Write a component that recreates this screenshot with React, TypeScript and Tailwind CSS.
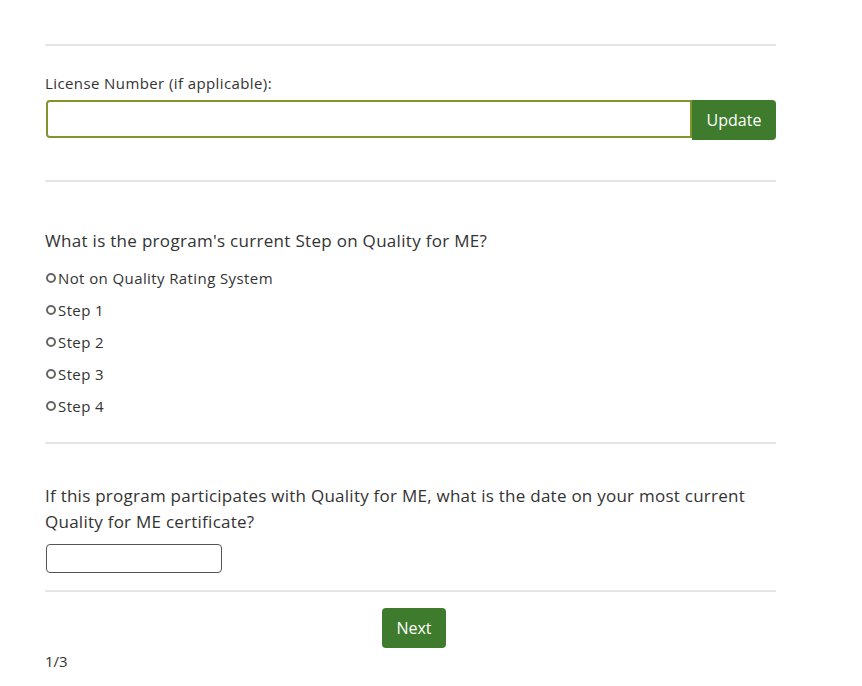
import { useState } from "react";

const steps = ["Not on Quality Rating System", "Step 1", "Step 2", "Step 3", "Step 4"];

export default function App() {
  const [license, setLicense] = useState("");
  const [step, setStep] = useState("");
  const [date, setDate] = useState("");

  return (
    <div className="bg-white min-h-[686px] text-[#333333] font-['Open_Sans',sans-serif]">
      <div className="w-[731px] ml-[45px] pt-[44px]">
        <hr className="border-t-2 border-[#e6e6e6]" />

        <div className="pt-[27px] pb-[40px]">
          <label className="block text-[15px] leading-[20px] tracking-[0.4px] mb-[7px]">
            License Number (if applicable):
          </label>
          <div className="flex items-stretch">
            <input
              type="text"
              value={license}
              onChange={(e) => setLicense(e.target.value)}
              className="flex-1 ml-px h-[38px] border-2 border-[#84942c] rounded-l-[4px] px-2 outline-none"
            />
            <button className="w-[84px] h-[40px] bg-[#3e7b2c] text-white text-[16px] rounded-r-[4px]">
              Update
            </button>
          </div>
        </div>

        <hr className="border-t-2 border-[#e6e6e6]" />

        <div className="pt-[46px] pb-[20px]">
          <p className="text-[17px] leading-[26px] tracking-[0.3px] mb-[8px]">
            What is the program's current Step on Quality for ME?
          </p>
          <div className="flex flex-col">
            {steps.map((s) => (
              <label key={s} className="flex items-center h-[32px] text-[15px] tracking-[0.4px] cursor-pointer">
                <input
                  type="radio"
                  name="step"
                  checked={step === s}
                  onChange={() => setStep(s)}
                  className="sr-only"
                />
                <span className="w-[10px] h-[10px] ml-[1px] mr-[2px] rounded-full border-2 border-[#666666] flex items-center justify-center">
                  {step === s && <span className="w-[4px] h-[4px] rounded-full bg-[#666666]" />}
                </span>
                {s}
              </label>
            ))}
          </div>
        </div>

        <hr className="border-t-2 border-[#e6e6e6]" />

        <div className="pt-[39px] pb-[17px]">
          <p className="text-[17px] leading-[26px] tracking-[0.25px] mb-[9px]">
            If this program participates with Quality for ME, what is the date on your most current
            Quality for ME certificate?
          </p>
          <input
            type="text"
            value={date}
            onChange={(e) => setDate(e.target.value)}
            className="block w-[176px] h-[29px] ml-px border border-[#555555] rounded-[4px] px-2 outline-none"
          />
        </div>

        <hr className="border-t-2 border-[#e6e6e6]" />

        <div className="flex justify-center pt-[16px] pl-[7px]">
          <button className="w-[64px] h-[40px] bg-[#3e7b2c] text-white text-[16px] rounded-[4px]">
            Next
          </button>
        </div>

        <p className="text-[15px] mt-[2px]">1/3</p>
      </div>
    </div>
  );
}
